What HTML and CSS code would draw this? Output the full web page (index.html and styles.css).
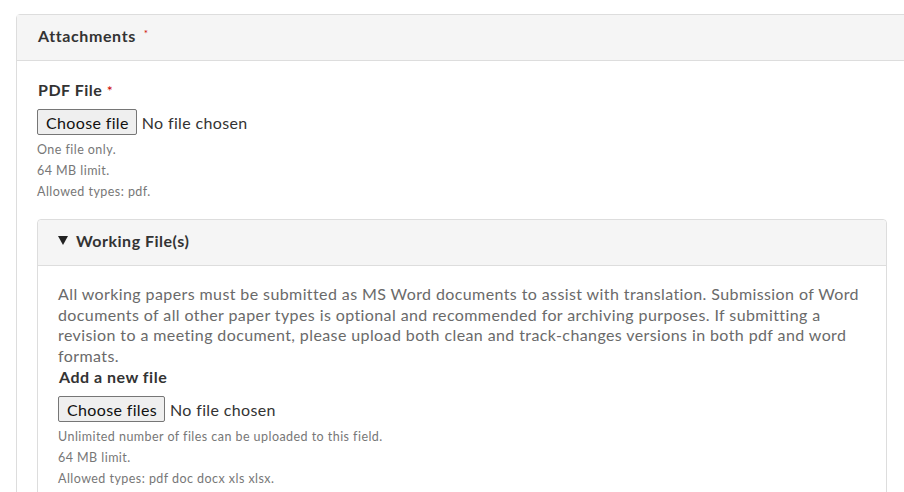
FILE: index.html
```html
<!DOCTYPE html>
<html>
<head>
<meta charset="utf-8">
<link rel="stylesheet" href="styles.css">
</head>
<body>
<fieldset class="panel">
  <div class="panel-head"><span class="panel-title">Attachments</span><span class="req req-small">*</span></div>
  <div class="panel-body">
    <div class="field">
      <div class="label">PDF File <span class="req">*</span></div>
      <label class="file">
        <span class="file-btn">Choose file</span>
        <span class="file-name">No file chosen</span>
        <input class="file-input" type="file">
      </label>
      <div class="desc">
        <div>One file only.</div>
        <div>64 MB limit.</div>
        <div>Allowed types: pdf.</div>
      </div>
    </div>
    <details class="group" open>
      <summary class="group-head"><span class="tri"></span>Working File(s)</summary>
      <div class="group-body">
        <p class="intro">All working papers must be submitted as MS Word documents to assist with translation. Submission of Word documents of all other paper types is optional and recommended for archiving purposes. If submitting a revision to a meeting document, please upload both clean and track-changes versions in both pdf and word formats.</p>
        <div class="label label-tight">Add a new file</div>
        <label class="file">
          <span class="file-btn">Choose files</span>
          <span class="file-name">No file chosen</span>
          <input class="file-input" type="file" multiple>
        </label>
        <div class="desc">
          <div>Unlimited number of files can be uploaded to this field.</div>
          <div>64 MB limit.</div>
          <div>Allowed types: pdf doc docx xls xlsx.</div>
        </div>
      </div>
    </details>
  </div>
</fieldset>
</body>
</html>
```
FILE: styles.css
```css
html, body {
  margin: 0;
  padding: 0;
  overflow: hidden;
  background: #fff;
}
body {
  padding: 14px 0 0 16px;
  font-family: Lato, "Open Sans", sans-serif;
  color: #333;
}
.panel {
  margin: 0;
  padding: 0;
  width: 900px;
  border: 1px solid #ddd;
  border-radius: 4px 0 0 0;
  min-inline-size: 0;
}
.panel-head {
  background: #f5f5f5;
  border-bottom: 1px solid #ddd;
  height: 46px;
  box-sizing: border-box;
  padding: 0 20px 4px 21px;
  display: flex;
  align-items: center;
}
.panel-title {
  font-weight: 700;
  font-size: 16px;
  letter-spacing: 0.6px;
}
.req {
  color: #c00;
  font-weight: 400;
  font-size: 14px;
}
.req-small {
  font-size: 10px;
  margin-left: 8px;
  align-self: flex-start;
  margin-top: 12px;
}
.panel-body {
  padding: 18px 30px 20px 20px;
}
.label {
  display: block;
  font-weight: 700;
  font-size: 16px;
  line-height: 22px;
  letter-spacing: 0.5px;
  margin: 0 0 7px 1px;
}
.label-tight {
  margin-bottom: 8px;
}
.file {
  display: flex;
  align-items: center;
  gap: 5px;
  font-size: 16px;
  letter-spacing: 0.35px;
  color: #333;
}
.file-btn {
  height: 26px;
  box-sizing: border-box;
  padding: 0 7px 0 8px;
  display: flex;
  align-items: center;
  background: #efefef;
  border: 1px solid #767676;
  border-radius: 2px;
  color: #111;
  cursor: pointer;
}
.file-input {
  display: none;
}
.desc {
  font-size: 12.5px;
  line-height: 21px;
  letter-spacing: 0.45px;
  color: #777;
  margin-top: 4px;
}
.group {
  margin-top: 17px;
  border: 1px solid #ddd;
  border-radius: 4px;
}
.group-head {
  list-style: none;
  background: #f5f5f5;
  border-bottom: 1px solid #ddd;
  border-radius: 4px 4px 0 0;
  height: 46px;
  box-sizing: border-box;
  padding: 0 20px 4px;
  display: flex;
  align-items: center;
  font-weight: 700;
  font-size: 16px;
  letter-spacing: 0.5px;
  cursor: pointer;
}
.group-head::-webkit-details-marker { display: none; }
.tri {
  width: 0;
  height: 0;
  border-left: 5px solid transparent;
  border-right: 5px solid transparent;
  border-top: 9px solid #222;
  margin-right: 8px;
}
.group-body {
  padding: 18px 20px 20px;
}
.intro {
  margin: 0;
  font-size: 16px;
  line-height: 20.5px;
  letter-spacing: 0.4px;
  color: #6a6a6a;
}
```
